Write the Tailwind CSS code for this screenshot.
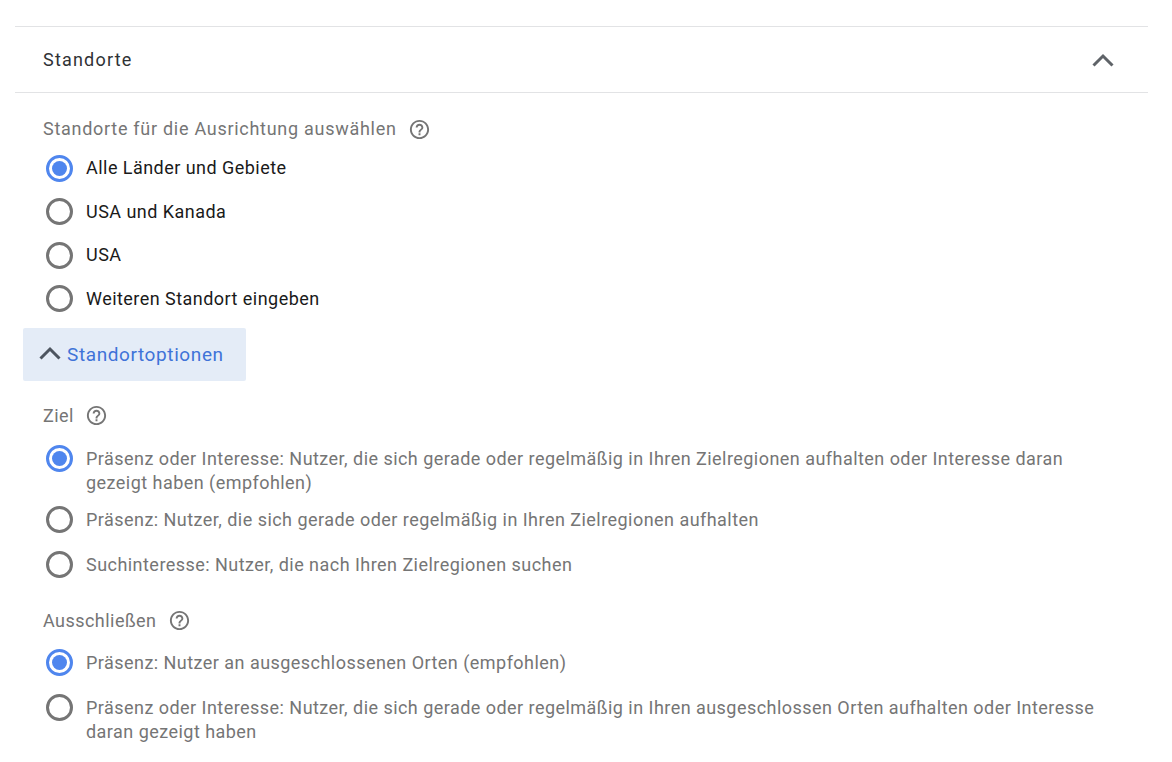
<!DOCTYPE html>
<html lang="de">
<head>
    <meta charset="UTF-8">
    <title>Standorte</title>
    <script src="https://cdn.jsdelivr.net/npm/@tailwindcss/browser@4"></script>
</head>
<body class="bg-white font-['Roboto',sans-serif] text-[18px] leading-6 tracking-[0.46px] overflow-hidden">

    <div class="w-[1172px] h-[762px] pt-[26px] pl-[15px] pr-[24px]">

        <!-- header -->
        <div class="h-[67px] border-y border-[#e2e3e5] pl-[28px] pr-[34px] flex items-center justify-between">
            <span class="text-[#2f3235] tracking-[1.2px]">Standorte</span>
            <svg class="w-[22px] h-[14px] text-[#5f6368]" viewBox="0 0 22 14" fill="none" stroke="currentColor" stroke-width="3"><path d="M1.5 12.5 11 3l9.5 9.5"/></svg>
        </div>

        <div class="pt-[24px] pl-[28px]">
            <div class="flex items-center gap-[11px] text-[#757575] tracking-[0.72px]">
                <span>Standorte für die Ausrichtung auswählen</span>
                <svg class="w-[23px] h-[23px]" viewBox="0 0 24 24" fill="currentColor"><path d="M11 18h2v-2h-2v2zm1-16C6.48 2 2 6.48 2 12s4.48 10 10 10 10-4.48 10-10S17.52 2 12 2zm0 18c-4.41 0-8-3.59-8-8s3.59-8 8-8 8 3.59 8 8-3.59 8-8 8zm0-14c-2.21 0-4 1.79-4 4h2c0-1.1.9-2 2-2s2 .9 2 2c0 2-3 1.75-3 5h2c0-2.25 3-2.5 3-5 0-2.21-1.79-4-4-4z"/></svg>
            </div>

            <div class="mt-[15px] flex flex-col gap-[19.5px] text-[#1a1a1a]">
                <label class="flex items-center gap-[13px] h-6 pl-[3px]">
                    <span class="w-[27px] h-[27px] shrink-0 rounded-full border-[3px] border-[#4f86ee] flex items-center justify-center"><span class="w-[15px] h-[15px] rounded-full bg-[#4f86ee]"></span></span>
                    <span>Alle Länder und Gebiete</span>
                </label>
                <label class="flex items-center gap-[13px] h-6 pl-[3px]">
                    <span class="w-[27px] h-[27px] shrink-0 rounded-full border-[3px] border-[#757575]"></span>
                    <span>USA und Kanada</span>
                </label>
                <label class="flex items-center gap-[13px] h-6 pl-[3px]">
                    <span class="w-[27px] h-[27px] shrink-0 rounded-full border-[3px] border-[#757575]"></span>
                    <span>USA</span>
                </label>
                <label class="flex items-center gap-[13px] h-6 pl-[3px]">
                    <span class="w-[27px] h-[27px] shrink-0 rounded-full border-[3px] border-[#757575]"></span>
                    <span>Weiteren Standort eingeben</span>
                </label>
            </div>
        </div>

        <button class="mt-[17px] ml-[8px] w-[223px] h-[53px] bg-[#e4ecf7] rounded-[2px] flex items-center pl-[16px] pt-[2px] gap-[6px] text-[#3f73d8] text-[19px] tracking-[0.6px]">
            <svg class="w-[22px] h-[14px] text-[#4d5560] shrink-0 -mt-[5px]" viewBox="0 0 22 14" fill="none" stroke="currentColor" stroke-width="3"><path d="M1.5 12.5 11 3l9.5 9.5"/></svg>
            <span>Standortoptionen</span>
        </button>

        <div class="pt-[23px] pl-[28px] text-[#757575]">
            <div class="flex items-center gap-[11px]">
                <span>Ziel</span>
                <svg class="w-[23px] h-[23px]" viewBox="0 0 24 24" fill="currentColor"><path d="M11 18h2v-2h-2v2zm1-16C6.48 2 2 6.48 2 12s4.48 10 10 10 10-4.48 10-10S17.52 2 12 2zm0 18c-4.41 0-8-3.59-8-8s3.59-8 8-8 8 3.59 8 8-3.59 8-8 8zm0-14c-2.21 0-4 1.79-4 4h2c0-1.1.9-2 2-2s2 .9 2 2c0 2-3 1.75-3 5h2c0-2.25 3-2.5 3-5 0-2.21-1.79-4-4-4z"/></svg>
            </div>

            <div class="mt-[19px] flex flex-col gap-[20px]">
                <label class="flex items-start gap-[13px] pl-[3px] -mb-[7px]">
                    <span class="w-[27px] h-[27px] -mt-[2px] shrink-0 rounded-full border-[3px] border-[#4f86ee] flex items-center justify-center"><span class="w-[15px] h-[15px] rounded-full bg-[#4f86ee]"></span></span>
                    <span class="w-[1010px]">Präsenz oder Interesse: Nutzer, die sich gerade oder regelmäßig in Ihren Zielregionen aufhalten oder Interesse daran gezeigt haben (empfohlen)</span>
                </label>
                <label class="flex items-start gap-[13px] pl-[3px]">
                    <span class="w-[27px] h-[27px] -mt-[2px] shrink-0 rounded-full border-[3px] border-[#757575]"></span>
                    <span>Präsenz: Nutzer, die sich gerade oder regelmäßig in Ihren Zielregionen aufhalten</span>
                </label>
                <label class="flex items-start gap-[13px] pl-[3px]">
                    <span class="w-[27px] h-[27px] -mt-[2px] shrink-0 rounded-full border-[3px] border-[#757575]"></span>
                    <span>Suchinteresse: Nutzer, die nach Ihren Zielregionen suchen</span>
                </label>
            </div>

            <div class="mt-[31px] flex items-center gap-[11px]">
                <span>Ausschließen</span>
                <svg class="w-[23px] h-[23px]" viewBox="0 0 24 24" fill="currentColor"><path d="M11 18h2v-2h-2v2zm1-16C6.48 2 2 6.48 2 12s4.48 10 10 10 10-4.48 10-10S17.52 2 12 2zm0 18c-4.41 0-8-3.59-8-8s3.59-8 8-8 8 3.59 8 8-3.59 8-8 8zm0-14c-2.21 0-4 1.79-4 4h2c0-1.1.9-2 2-2s2 .9 2 2c0 2-3 1.75-3 5h2c0-2.25 3-2.5 3-5 0-2.21-1.79-4-4-4z"/></svg>
            </div>

            <div class="mt-[18px] flex flex-col gap-[20px]">
                <label class="flex items-start gap-[13px] pl-[3px]">
                    <span class="w-[27px] h-[27px] -mt-[2px] shrink-0 rounded-full border-[3px] border-[#4f86ee] flex items-center justify-center"><span class="w-[15px] h-[15px] rounded-full bg-[#4f86ee]"></span></span>
                    <span>Präsenz: Nutzer an ausgeschlossenen Orten (empfohlen)</span>
                </label>
                <label class="flex items-start gap-[13px] pl-[3px]">
                    <span class="w-[27px] h-[27px] -mt-[2px] shrink-0 rounded-full border-[3px] border-[#757575]"></span>
                    <span class="w-[1020px]">Präsenz oder Interesse: Nutzer, die sich gerade oder regelmäßig in Ihren ausgeschlossen Orten aufhalten oder Interesse daran gezeigt haben</span>
                </label>
            </div>
        </div>
    </div>

</body>
</html>
